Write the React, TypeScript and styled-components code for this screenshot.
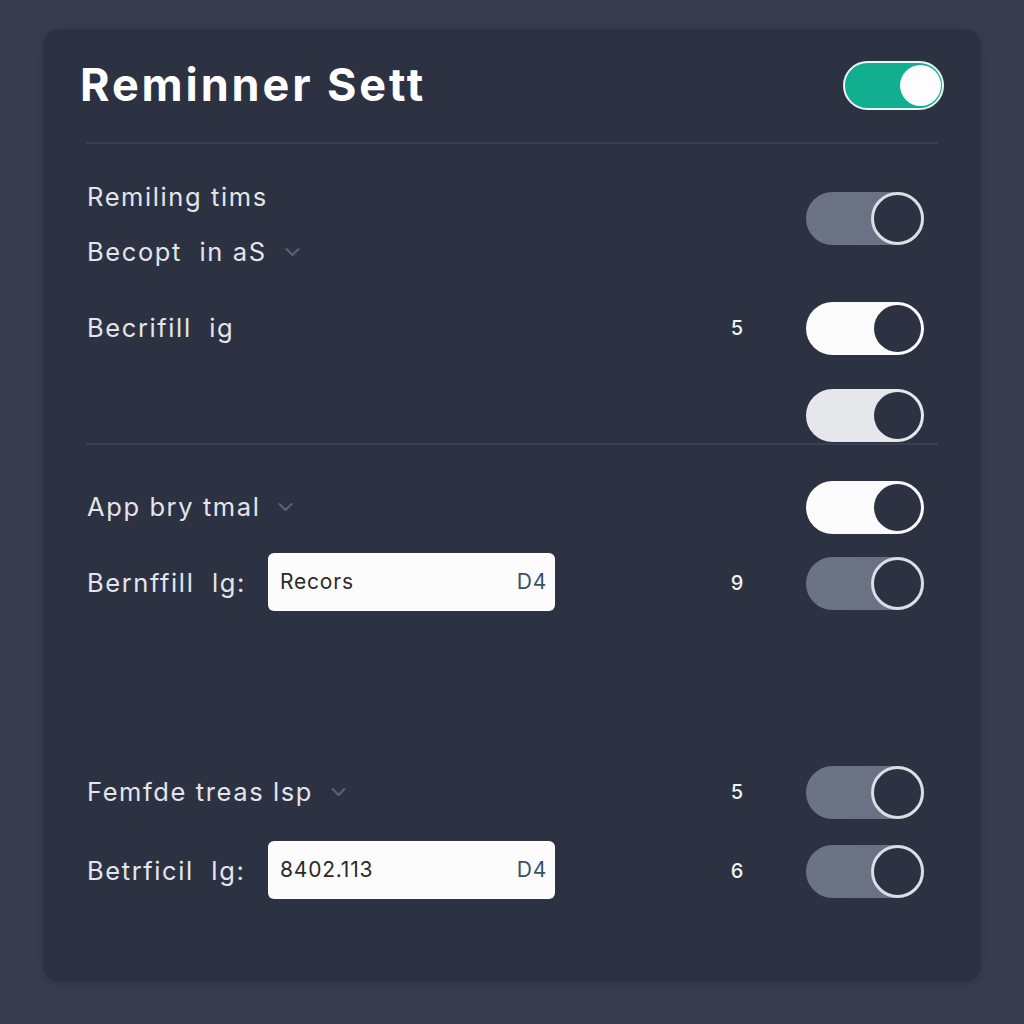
import React from "react";
import styled, { createGlobalStyle } from "styled-components";

const Global = createGlobalStyle`
  html, body { margin: 0; padding: 0; }
  body {
    background: #373c4f;
    font-family: Inter, "Noto Sans", "Liberation Sans", sans-serif;
    width: 1024px;
    height: 1024px;
    overflow: hidden;
  }
`;

const Card = styled.div`
  margin: 29px 43px 0 43px;
  width: 938px;
  height: 953px;
  box-sizing: border-box;
  background: #2d3243;
  border-radius: 16px;
  box-shadow: 0 2px 10px rgba(0, 0, 0, 0.12);
  display: flex;
  flex-direction: column;
`;

const Header = styled.div`
  height: 113px;
  padding: 0 37px;
  display: flex;
  align-items: center;
  justify-content: space-between;
  box-sizing: border-box;
`;

const Title = styled.h1`
  margin: 0;
  font-size: 45px;
  font-weight: 700;
  color: #ffffff;
  letter-spacing: 2.9px;
  margin-top: -2px;
`;

const Divider = styled.div`
  height: 2px;
  margin: 0 43px;
  background: #3a4053;
`;

const Section = styled.div<{ $pt?: number }>`
  padding: ${(p) => p.$pt ?? 0}px 57px 0 44px;
  display: flex;
  flex-direction: column;
`;

const Row = styled.div<{ $h: number; $align?: string; $mt?: number }>`
  display: grid;
  grid-template-columns: 1fr 60px 118px;
  column-gap: 39px;
  height: ${(p) => p.$h}px;
  margin-top: ${(p) => p.$mt ?? 0}px;
  align-items: ${(p) => p.$align ?? "center"};
`;

const LabelStack = styled.div<{ $pt: number }>`
  display: flex;
  flex-direction: column;
  gap: 15px;
  padding-top: ${(p) => p.$pt}px;
`;

const Label = styled.div`
  font-size: 25.5px;
  line-height: 40px;
  letter-spacing: 1.6px;
  color: #e3e5ea;
  display: flex;
  align-items: center;
  white-space: pre;
`;

const FieldLine = styled.div`
  display: flex;
  align-items: center;
`;

const FieldLabel = styled(Label)`
  width: 181px;
  flex: none;
`;

const Input = styled.div`
  width: 287px;
  height: 58px;
  box-sizing: border-box;
  background: #fcfcfc;
  border-radius: 6px;
  display: flex;
  align-items: center;
  justify-content: space-between;
  padding: 0 8px 0 12px;
  font-size: 21px;
  letter-spacing: 0.8px;
  color: #2a2a2a;
  margin-top: -3px;
`;

const Suffix = styled.span`
  color: #34506e;
  font-size: 21px;
`;

const Num = styled.div`
  text-align: center;
  font-size: 20px;
  color: #f1f2f5;
  font-weight: 500;
`;

const Chevron = styled.svg`
  margin-left: 18px;
  width: 15px;
  height: 10px;
  flex: none;
`;

type ToggleKind = "gray" | "white" | "light";

const Track = styled.div<{ $kind: ToggleKind; $mt?: number }>`
  grid-column: 3;
  position: relative;
  width: 118px;
  height: 53px;
  border-radius: 27px;
  margin-top: ${(p) => p.$mt ?? 0}px;
  align-self: ${(p) => (p.$mt !== undefined ? "start" : "center")};
  background: ${(p) =>
    p.$kind === "gray"
      ? "linear-gradient(90deg, #6c7384 0%, #6a7182 70%, #5c6373 100%)"
      : p.$kind === "white"
      ? "#fbfbfb"
      : "#e6e7ea"};
`;

const Knob = styled.div<{ $kind: ToggleKind }>`
  position: absolute;
  top: ${(p) => (p.$kind === "gray" ? 0 : 3)}px;
  right: ${(p) => (p.$kind === "gray" ? 0 : 3)}px;
  width: ${(p) => (p.$kind === "gray" ? 53 : 47)}px;
  height: ${(p) => (p.$kind === "gray" ? 53 : 47)}px;
  box-sizing: border-box;
  border-radius: 50%;
  background: #2d3243;
  border: ${(p) => (p.$kind === "gray" ? "3px solid #dcdee3" : "none")};
`;

const Toggle: React.FC<{ kind: ToggleKind; mt?: number }> = ({ kind, mt }) => (
  <Track $kind={kind} $mt={mt}>
    <Knob $kind={kind} />
  </Track>
);

const MainTrack = styled.div`
  position: relative;
  width: 101px;
  height: 49px;
  box-sizing: border-box;
  border-radius: 25px;
  background: #12ae90;
  border: 2.5px solid #e9f6f3;
`;

const MainKnob = styled.div`
  position: absolute;
  top: 1.5px;
  right: 1.5px;
  width: 41px;
  height: 41px;
  border-radius: 50%;
  background: #fdfdfd;
`;

const Down = () => (
  <Chevron viewBox="0 0 15 10">
    <path d="M1.5 2 L7.5 8 L13.5 2" fill="none" stroke="#5d6376" strokeWidth="2" strokeLinecap="round" strokeLinejoin="round" />
  </Chevron>
);

export default function App() {
  return (
    <>
      <Global />
      <Card>
        <Header>
          <Title>Reminner Sett</Title>
          <MainTrack>
            <MainKnob />
          </MainTrack>
        </Header>
        <Divider />
        <Section>
          <Row $h={136} $align="start">
            <LabelStack $pt={33}>
              <Label>Remiling tims</Label>
              <Label>
                {"Becopt  in aS"}
                <Down />
              </Label>
            </LabelStack>
            <div />
            <Toggle kind="gray" mt={48} />
          </Row>
          <Row $h={96}>
            <Label>{"Becrifill  ig"}</Label>
            <Num>5</Num>
            <Toggle kind="white" />
          </Row>
          <Row $h={67} $align="start">
            <div />
            <div />
            <Toggle kind="light" mt={13} />
          </Row>
        </Section>
        <Divider />
        <Section $pt={26}>
          <Row $h={72}>
            <Label>
              App bry tmal
              <Down />
            </Label>
            <div />
            <Toggle kind="white" />
          </Row>
          <Row $h={80}>
            <FieldLine>
              <FieldLabel>{"Bernffill  lg:"}</FieldLabel>
              <Input>
                Recors
                <Suffix>D4</Suffix>
              </Input>
            </FieldLine>
            <Num>9</Num>
            <Toggle kind="gray" />
          </Row>
          <Row $h={72} $mt={133}>
            <Label>
              Femfde treas lsp
              <Down />
            </Label>
            <Num>5</Num>
            <Toggle kind="gray" />
          </Row>
          <Row $h={80} $mt={3}>
            <FieldLine>
              <FieldLabel>{"Betrficil  lg:"}</FieldLabel>
              <Input>
                8402.113
                <Suffix>D4</Suffix>
              </Input>
            </FieldLine>
            <Num>6</Num>
            <Toggle kind="gray" />
          </Row>
        </Section>
      </Card>
    </>
  );
}
